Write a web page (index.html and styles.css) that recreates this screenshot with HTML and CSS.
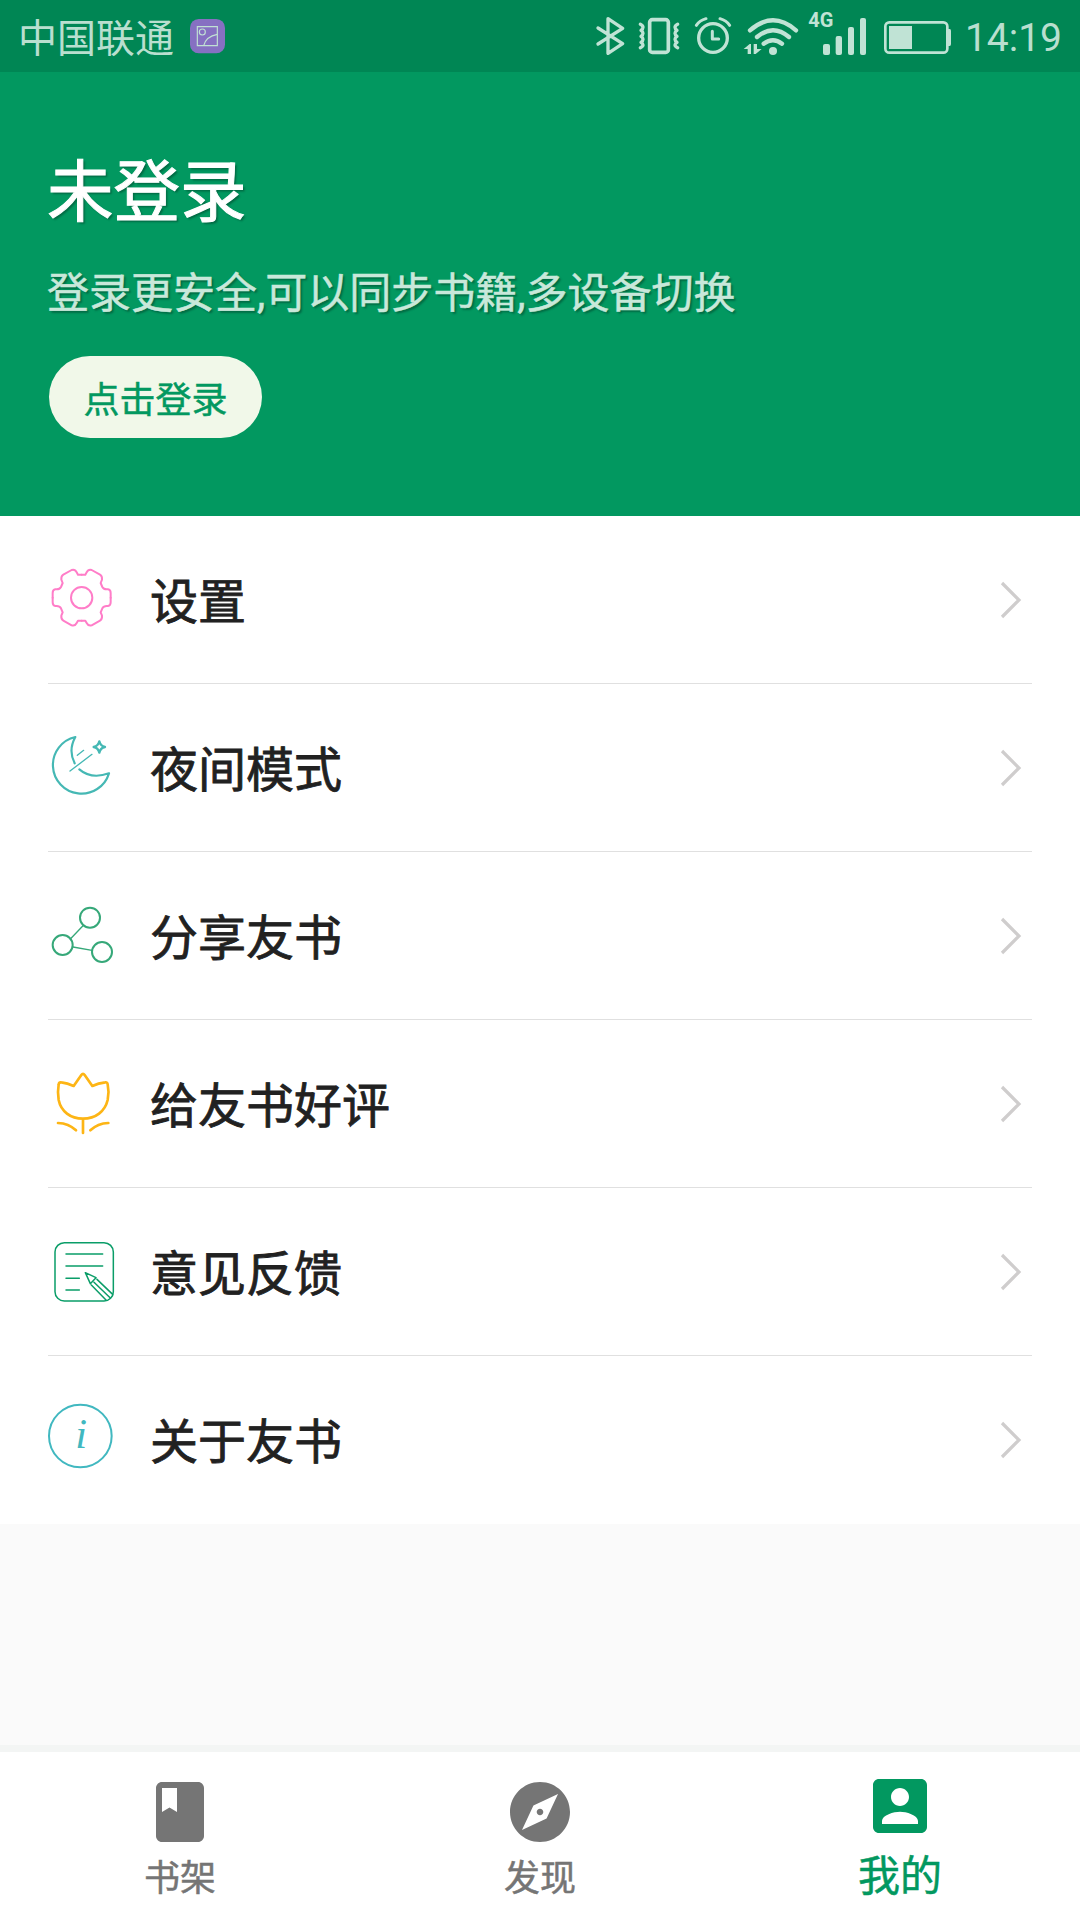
FILE: index.html
```html
<!DOCTYPE html>
<html lang="zh-CN">
<head>
    <meta charset="UTF-8">
    <meta name="viewport" content="width=device-width, initial-scale=1.0">
    <title>我的</title>
    <link rel="stylesheet" href="styles.css">
</head>
<body>
    <div class="statusBar">
        <span class="carrier">中国联通</span>
        <svg class="appBadge" width="35" height="35" viewBox="0 0 105 105">
            <rect width="105" height="103" rx="26" fill="#8670c2"/>
            <g fill="none" stroke="#c0e1d4" stroke-width="3.5">
                <path d="M22 23H82V80H22Z"/>
                <circle cx="37" cy="39" r="9"/>
                <path d="M41 80Q48 52 82 46"/>
            </g>
        </svg>
        <div class="statusIcons">
            <!-- Bluetooth -->
            <svg width="36" height="72" viewBox="42 0 108 216">
                <path class="line" stroke-width="10" d="M54 84L128 131L84 160V56L128 85L54 132"/>
            </svg>
            <!-- Вибрация -->
            <svg width="57" height="72" viewBox="150 0 171 216">
                <rect class="line" stroke-width="11" x="209" y="59" width="56" height="98" rx="8"/>
                <path class="line" stroke-width="10" d="M181 73q8 4 8 9t-6 9q6 4 6 9t-6 9q6 4 6 9t-6 9q6 4 6 8t-8 8M293 73q-8 4-8 9t6 9q-6 4-6 9t6 9q-6 4-6 9t6 9q-6 4-6 8t8 8"/>
            </svg>
            <!-- Будильник -->
            <svg width="50" height="72" viewBox="321 0 150 216">
                <circle class="line" stroke-width="10" cx="399" cy="114" r="43"/>
                <path class="line" stroke-width="9" d="M397 94V117H416M349 76Q359 61 378 56M420 56Q439 61 449 76"/>
            </svg>
            <!-- Wi-Fi -->
            <svg width="66" height="72" viewBox="471 0 198 216">
                <path class="line" stroke-width="13" d="M510 91Q579 31 648 91M531 111Q579 70 627 111M551 131Q579 110 606 131"/>
                <circle class="solid" cx="579" cy="153" r="12"/>
                <path class="solid" d="M491 147L509 132H513V162H503V147ZM521 132H531V147H545L527 162H521Z"/>
            </svg>
            <!-- Сигнал -->
            <svg width="70" height="72" viewBox="669 0 210 216">
                <text class="netType" x="685" y="80">4G</text>
                <g class="solid">
                    <rect x="729" y="132" width="21" height="33" rx="6"/>
                    <rect x="767" y="108" width="19" height="57" rx="6"/>
                    <rect x="804" y="81" width="18" height="84" rx="6"/>
                    <rect x="840" y="54" width="18" height="111" rx="6"/>
                </g>
            </svg>
            <!-- Батарея -->
            <svg width="84" height="72" viewBox="879 0 252 216">
                <rect class="line" stroke-width="8" x="916" y="67" width="186" height="91" rx="12"/>
                <rect class="solid" x="927" y="78" width="69" height="69"/>
                <path class="solid" d="M1104 87H1109Q1113 87 1113 92V132Q1113 138 1109 138H1104Z"/>
            </svg>
        </div>
        <span class="clock">14:19</span>
    </div>

    <div class="profile">
        <h1 class="profileTitle">未登录</h1>
        <p class="profileText">登录更安全,可以同步书籍,多设备切换</p>
        <button class="loginButton">点击登录</button>
    </div>

    <ul class="menu">
        <li class="menuItem">
            <svg class="menuIcon pink" viewBox="0 0 216 216">
                <g id="gearHalf">
                    <path id="gearQuarter" d="M101 32H112L116 25Q121 15 131 18L156 32Q163 36 162 47L158 57L163 69Q167 76 176 76H180Q188 77 188 87V101"/>
                    <use href="#gearQuarter" transform="translate(0 202) scale(1 -1)"/>
                </g>
                <use href="#gearHalf" transform="translate(202 0) scale(-1 1)"/>
                <circle cx="101" cy="101" r="32"/>
            </svg>
            <span class="menuLabel">设置</span>
            <svg class="arrow" viewBox="0 0 24 40"><path d="M4 3L21 20L4 37"/></svg>
        </li>
        <li class="menuItem">
            <svg class="menuIcon teal" viewBox="0 0 216 216">
                <path stroke-width="6.5" d="M80 94Q60 55 82 15A86 86 0 1 0 183 124Q130 143 94 112"/>
                <path stroke-width="4" d="M66 117L132 67M88 70L107 55"/>
                <path stroke-width="7" d="M154 28Q157 42 171 45Q157 48 154 62Q151 48 137 45Q151 42 154 28Z"/>
            </svg>
            <span class="menuLabel">夜间模式</span>
            <svg class="arrow" viewBox="0 0 24 40"><path d="M4 3L21 20L4 37"/></svg>
        </li>
        <li class="menuItem">
            <svg class="menuIcon green" viewBox="0 0 216 216">
                <circle cx="126" cy="53" r="30"/>
                <circle cx="44" cy="135" r="30"/>
                <circle cx="162" cy="156" r="30"/>
                <path stroke-width="4" d="M67 117L105 77M75 141L132 151"/>
            </svg>
            <span class="menuLabel">分享友书</span>
            <svg class="arrow" viewBox="0 0 24 40"><path d="M4 3L21 20L4 37"/></svg>
        </li>
        <li class="menuItem">
            <svg class="menuIcon yellow" viewBox="0 0 216 216">
                <path d="M100 21Q105 14 110 21L133 54Q151 45 172 43Q178 42 179 49Q184 72 179 96C171 130 143 152 105 152C67 152 39 130 32 96Q28 72 32 49Q33 42 40 43Q58 45 77 54ZM105 152V195M30 165Q62 166 84 187M181 165Q149 166 127 187"/>
            </svg>
            <span class="menuLabel">给友书好评</span>
            <svg class="arrow" viewBox="0 0 24 40"><path d="M4 3L21 20L4 37"/></svg>
        </li>
        <li class="menuItem">
            <svg class="menuIcon darkGreen" viewBox="0 0 216 216">
                <rect x="21" y="20" width="175" height="175" rx="28"/>
                <path d="M54 54H164M54 90H164M54 127H94M54 162H94M112 110L144 125L127 143ZM147 130L194 175M138 139L187 186M130 147L174 192"/>
            </svg>
            <span class="menuLabel">意见反馈</span>
            <svg class="arrow" viewBox="0 0 24 40"><path d="M4 3L21 20L4 37"/></svg>
        </li>
        <li class="menuItem">
            <svg class="menuIcon cyan" viewBox="0 0 216 216">
                <circle cx="97" cy="96" r="94"/>
                <text class="infoLetter" x="82" y="131">i</text>
            </svg>
            <span class="menuLabel">关于友书</span>
            <svg class="arrow" viewBox="0 0 24 40"><path d="M4 3L21 20L4 37"/></svg>
        </li>
    </ul>

    <nav class="tabBar">
        <a class="tab">
            <svg class="tabIcon" viewBox="0 0 24 24"><path d="M18 2H6c-1.100 0-2 .9-2 2v16c0 1.100.9 2 2 2h12c1.100 0 2-.9 2-2V4c0-1.100-.9-2-2-2zM6 4h5v8l-2.500-1.500L6 12V4z"/></svg>
            <span>书架</span>
        </a>
        <a class="tab">
            <svg class="tabIcon" viewBox="0 0 24 24"><path d="M12 10.900c-.61 0-1.100.49-1.100 1.100s.49 1.100 1.100 1.100 1.100-.49 1.100-1.100-.49-1.100-1.100-1.100zM12 2C6.480 2 2 6.480 2 12s4.480 10 10 10 10-4.480 10-10S17.520 2 12 2zm2.190 12.190L6 18l3.810-8.190L18 6l-3.810 8.190z"/></svg>
            <span>发现</span>
        </a>
        <a class="tab active">
            <svg class="tabIcon" viewBox="0 0 24 24"><path d="M3 5v14c0 1.100.89 2 2 2h14c1.100 0 2-.9 2-2V5c0-1.100-.9-2-2-2H5c-1.110 0-2 .9-2 2zm12 4c0 1.660-1.340 3-3 3s-3-1.340-3-3 1.340-3 3-3 3 1.340 3 3zm-9 8c0-2 4-3.100 6-3.100s6 1.100 6 3.100v1H6v-1z"/></svg>
            <span>我的</span>
        </a>
    </nav>
</body>
</html>
```
FILE: styles.css
```css
* {
    margin: 0;
    padding: 0;
    box-sizing: border-box;
}
body {
    display: flex;
    flex-direction: column;
    height: 100vh;
    overflow: hidden;
    background: #fafafa;
    font-family: Roboto, "Noto Sans CJK SC", sans-serif;
}
svg {
    display: block;
    flex: none;
}

/* Status bar */
.statusBar {
    display: flex;
    align-items: center;
    height: 72px;
    padding: 0 18px;
    background: #008654;
    color: #b9dfcf;
}
.carrier {
    width: 172px;
    padding-top: 5px;
    font-size: 39px;
    line-height: 72px;
    white-space: nowrap;
}
.statusIcons {
    display: flex;
    margin-left: auto;
}
.line {
    fill: none;
    stroke: #c0e3d5;
    stroke-linecap: round;
    stroke-linejoin: round;
}
.solid {
    fill: #c0e3d5;
}
.netType {
    fill: #c0e3d5;
    font-size: 60px;
    font-weight: 700;
}
.clock {
    width: 105px;
    padding-top: 3px;
    font-size: 39px;
    line-height: 72px;
    text-align: right;
}

/* Profile header */
.profile {
    height: 444px;
    padding: 73px 48px 0 47px;
    background: #029860;
}
.profileTitle {
    height: 96px;
    font-size: 66.500px;
    line-height: 96px;
    font-weight: 400;
    color: #fff;
    -webkit-text-stroke: 1px;
    text-shadow: 2px 2px 2px rgba(0, 0, 0, 0.3);
}
.profileText {
    height: 64px;
    margin-top: 21px;
    font-size: 42px;
    line-height: 64px;
    color: #c8e8da;
    -webkit-text-stroke: 0.500px;
    text-shadow: 2px 2px 2px rgba(0, 0, 0, 0.3);
}
.loginButton {
    display: block;
    width: 213px;
    height: 82px;
    margin: 30px 0 0 2px;
    border: none;
    border-radius: 41px;
    background: #f1f8e9;
    color: #029860;
    font-family: inherit;
    font-size: 36px;
    -webkit-text-stroke: 0.500px;
}

/* Menu */
.menu {
    padding: 0 48px;
    background: #fff;
    list-style: none;
}
.menuItem {
    display: flex;
    align-items: center;
    height: 168px;
    border-bottom: 1px solid #e0e0e0;
}
.menuItem:last-child {
    border-bottom-color: transparent;
}
.menuIcon {
    width: 72px;
    height: 72px;
    margin-right: 30px;
    overflow: visible;
    fill: none;
    stroke: currentColor;
    stroke-width: 6;
    stroke-linecap: round;
    stroke-linejoin: round;
}
.pink { color: #ff7dc8; }
.teal { color: #45b8b4; }
.green { color: #36a879; }
.yellow {
    color: #fdb515;
    stroke-width: 8;
}
.darkGreen {
    color: #0a9d68;
    stroke-width: 4.500;
}
.cyan { color: #41b8c0; }
.infoLetter {
    fill: currentColor;
    stroke: none;
    font: italic 128px "Liberation Serif", serif;
}
.menuLabel {
    flex: 1;
    padding-top: 6px;
    font-size: 48px;
    line-height: 72px;
    color: #212121;
    -webkit-text-stroke: 0.800px;
}
.arrow {
    width: 24px;
    height: 40px;
    margin-right: 10px;
    fill: none;
    stroke: #cfcdcd;
    stroke-width: 3.200;
}

/* Bottom tabs */
.tabBar {
    display: flex;
    height: 175px;
    margin-top: auto;
    border-top: 7px solid #f3f5f4;
    background: #fff;
}
.tab {
    display: flex;
    flex: 1;
    flex-direction: column;
    align-items: center;
    padding-top: 24px;
    color: #757575;
    font-size: 36px;
    line-height: 62px;
    -webkit-text-stroke: 0.500px;
}
.tabIcon {
    width: 72px;
    height: 72px;
    fill: currentColor;
}
.tab.active {
    padding-top: 18px;
    color: #029860;
    font-size: 42px;
    line-height: 70px;
}
```
